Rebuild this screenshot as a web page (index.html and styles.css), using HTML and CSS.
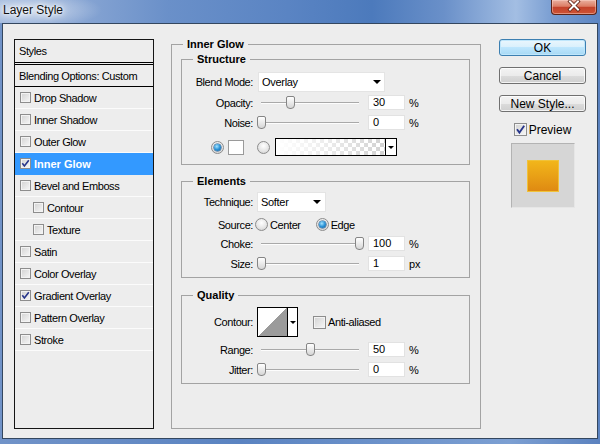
FILE: index.html
```html
<!DOCTYPE html>
<html>
<head>
<meta charset="utf-8">
<title>Layer Style</title>
<link rel="stylesheet" href="styles.css">
</head>
<body>
<div class="window">
  <div class="titlebar">
    <span class="title">Layer Style</span>
    <div class="close">
      <svg width="46" height="15" viewBox="0 0 46 15">
        <path d="M19 2.5 L27 10.5 M27 2.5 L19 10.5" stroke="#5a1e12" stroke-width="3.6" stroke-linecap="square" fill="none"/>
        <path d="M19 2.5 L27 10.5 M27 2.5 L19 10.5" stroke="#ffffff" stroke-width="2" stroke-linecap="square" fill="none"/>
      </svg>
    </div>
  </div>
  <div class="client">
    <div class="stylelist">
      <div class="row head">Styles</div>
      <div class="row blend">Blending Options: Custom</div>
      <div class="row item"><span class="cb"></span>Drop Shadow</div>
      <div class="row item"><span class="cb"></span>Inner Shadow</div>
      <div class="row item"><span class="cb"></span>Outer Glow</div>
      <div class="row item sel"><span class="cb"><svg width="9" height="9" viewBox="0 0 9 9"><path d="M1.3 4.2 L3.4 7 L7.8 1.2" stroke="#27358a" stroke-width="1.6" fill="none"/></svg></span>Inner Glow</div>
      <div class="row item"><span class="cb"></span>Bevel and Emboss</div>
      <div class="row item sub"><span class="cb"></span>Contour</div>
      <div class="row item sub"><span class="cb"></span>Texture</div>
      <div class="row item"><span class="cb"></span>Satin</div>
      <div class="row item"><span class="cb"></span>Color Overlay</div>
      <div class="row item"><span class="cb"><svg width="9" height="9" viewBox="0 0 9 9"><path d="M1.3 4.2 L3.4 7 L7.8 1.2" stroke="#27358a" stroke-width="1.6" fill="none"/></svg></span>Gradient Overlay</div>
      <div class="row item"><span class="cb"></span>Pattern Overlay</div>
      <div class="row item"><span class="cb"></span>Stroke</div>
    </div>

    <div class="middle">
      <fieldset class="grp outer">
        <legend>Inner Glow</legend>

        <fieldset class="grp inner structure">
          <legend>Structure</legend>
          <div class="frow r20">
            <span class="lbl">Blend Mode:</span>
            <div class="select blendsel"><span>Overlay</span><span class="arrow"></span></div>
          </div>
          <div class="frow mt3">
            <span class="lbl">Opacity:</span>
            <div class="slider"><span class="track"></span><span class="thumb" style="--v:0.3"></span></div>
            <span class="num">30</span><span class="unit">%</span>
          </div>
          <div class="frow mt5">
            <span class="lbl">Noise:</span>
            <div class="slider"><span class="track"></span><span class="thumb" style="--v:0"></span></div>
            <span class="num">0</span><span class="unit">%</span>
          </div>
          <div class="frow colors">
            <span class="radio on"></span>
            <span class="swatchsm"></span>
            <span class="radio r2"></span>
            <div class="gradbox"><span class="fill"></span><span class="drop"><span class="arrow sm"></span></span></div>
          </div>
        </fieldset>

        <fieldset class="grp inner elements">
          <legend>Elements</legend>
          <div class="frow r20">
            <span class="lbl">Technique:</span>
            <div class="select techsel"><span>Softer</span><span class="arrow"></span></div>
          </div>
          <div class="frow mt5">
            <span class="lbl tight">Source:</span>
            <span class="radio"></span><span class="rtext">Center</span>
            <span class="radio on edge"></span><span class="rtext">Edge</span>
          </div>
          <div class="frow mt4">
            <span class="lbl">Choke:</span>
            <div class="slider"><span class="track"></span><span class="thumb" style="--v:1"></span></div>
            <span class="num">100</span><span class="unit">%</span>
          </div>
          <div class="frow mt5">
            <span class="lbl">Size:</span>
            <div class="slider"><span class="track"></span><span class="thumb" style="--v:0"></span></div>
            <span class="num">1</span><span class="unit">px</span>
          </div>
        </fieldset>

        <fieldset class="grp inner quality">
          <legend>Quality</legend>
          <div class="frow r30">
            <span class="lbl">Contour:</span>
            <div class="contour"><span class="cpic"></span><span class="cdrop"><span class="arrow sm"></span></span></div>
            <span class="cb big aa"></span><span class="cbtext">Anti-aliased</span>
          </div>
          <div class="frow mt5">
            <span class="lbl">Range:</span>
            <div class="slider"><span class="track"></span><span class="thumb" style="--v:0.5"></span></div>
            <span class="num">50</span><span class="unit">%</span>
          </div>
          <div class="frow mt5">
            <span class="lbl">Jitter:</span>
            <div class="slider"><span class="track"></span><span class="thumb" style="--v:0"></span></div>
            <span class="num">0</span><span class="unit">%</span>
          </div>
        </fieldset>
      </fieldset>
    </div>

    <div class="side">
      <div class="btn def">OK</div>
      <div class="btn">Cancel</div>
      <div class="btn">New Style...</div>
      <div class="prev"><span class="cb big"><svg width="11" height="11" viewBox="0 0 11 11"><path d="M2 5.3 L4.4 8.6 L9.2 1.8" stroke="#27358a" stroke-width="1.8" fill="none"/></svg></span><span class="prevtext">Preview</span></div>
      <div class="swatch"><span class="square"></span></div>
    </div>
  </div>
</div>
</body>
</html>
```

FILE: styles.css
```css
* { box-sizing: border-box; }
html, body { margin: 0; padding: 0; }
body {
  width: 600px;
  height: 444px;
  overflow: hidden;
  font-family: "Liberation Sans", Arial, sans-serif;
  font-size: 11px;
  color: #000;
}

.window {
  width: 600px;
  height: 444px;
  display: flex;
  flex-direction: column;
  background: linear-gradient(90deg, #7193c8 0%, #5a83c1 40%, #7c9fd2 85%, #5b82bf 100%);
}

.titlebar {
  height: 23px;
  flex: none;
  display: flex;
  justify-content: space-between;
  align-items: flex-start;
  background:
    radial-gradient(ellipse 70px 18px at 32px 10px, rgba(255,255,255,0.55), rgba(255,255,255,0)),
    linear-gradient(90deg, #9db6dc 0%, #8aa7d4 12%, #6a90c9 28%, #5a84c3 48%, #4c7abc 62%, #6a90c9 74%, #a3bee3 86%, #7a9ed2 92%, #5c85c3 100%);
}

.title {
  padding-left: 3px;
  font-size: 12px;
  line-height: 20px;
  color: #111;
  text-shadow: 0 0 6px #fff, 0 0 10px #fff, 0 0 3px rgba(255,255,255,0.9);
}

.close {
  width: 46px;
  height: 15px;
  margin-right: 3px;
  border: 1px solid #5b2418;
  border-top: none;
  border-radius: 0 0 4px 4px;
  background: linear-gradient(#eab0a0 0%, #dc7d65 45%, #c4422b 52%, #cd5335 100%);
  box-shadow: inset 0 0 0 1px rgba(255,220,210,0.45);
}
.close svg { display: block; margin-top: -1px; margin-left: -1px; }

.client {
  margin-left: 2px;
  width: 596px;
  height: 416px;
  flex: none;
  border: 1px solid #34475f;
  background: #ededed;
  display: flex;
  align-items: flex-start;
  padding: 13px 0 0 11px;
}

/* ---------- left style list ---------- */
.stylelist {
  flex: none;
  margin-top: 2px;
  width: 140px;
  height: 390px;
  border: 1px solid #151515;
}
.row {
  height: 22px;
  display: flex;
  align-items: center;
  border-bottom: 1px solid #fbfbfb;
  padding-left: 5px;
  letter-spacing: -0.4px;
  white-space: nowrap;
}
.row.head {
  height: 23px;
  padding-left: 4px;
  border-bottom: 1px solid #000;
}
.row.blend {
  height: 23px;
  margin-top: 1px;
  padding-left: 4px;
  border-top: 1px solid #000;
  border-bottom: 1px solid #000;
}
.row.sub { padding-left: 18px; }
.row.sel {
  background: #3399ff;
  border-bottom-color: #3399ff;
  color: #fff;
  font-weight: bold;
  letter-spacing: 0;
}

.cb {
  flex: none;
  width: 11px;
  height: 11px;
  margin-right: 3px;
  border: 1px solid #8d8d8d;
  background: linear-gradient(135deg, #d2d2d2, #f7f7f7);
  box-shadow: inset 0 0 0 1px #f3f3f3;
  display: flex;
  align-items: center;
  justify-content: center;
}
.cb svg { display: block; }
.cb.big { width: 13px; height: 13px; margin-right: 2px; }

/* ---------- middle groups ---------- */
.middle {
  flex: none;
  width: 310px;
  margin-left: 17px;
}
.grp {
  margin: 0;
  padding: 0;
  min-width: 0;
  border: 1px solid #a3a3a3;
}
.grp > legend {
  margin-left: 11px;
  padding: 0 4px;
  height: 14px;
  line-height: 14px;
  font-weight: bold;
  font-size: 11px;
}
.grp.outer { height: 392px; }
.grp.structure { margin: 1px 10px 0 9px; padding: 6px 0 8px 0; }
.grp.elements { margin: 9px 10px 0 9px; padding: 4px 0 6px 0; }
.grp.quality { margin: 10px 10px 0 9px; padding: 5px 0 6px 0; }

.frow {
  display: flex;
  align-items: center;
  height: 15px;
  white-space: nowrap;
}
.frow.r20 { height: 20px; }
.frow.r30 { height: 30px; }
.mt3 { margin-top: 3px; }
.mt4 { margin-top: 4px; }
.mt5 { margin-top: 5px; }

.lbl {
  flex: none;
  width: 71px;
  margin-right: 4px;
  text-align: right;
  letter-spacing: -0.4px;
}
.lbl.tight { margin-right: 2px; }

.select {
  flex: none;
  height: 20px;
  background: #fff;
  border: 1px solid #e4e4e4;
  display: flex;
  align-items: center;
  justify-content: space-between;
  padding: 0 3px 0 3px;
  letter-spacing: -0.3px;
}
.blendsel { width: 127px; margin-left: 1px; }
.techsel { width: 69px; padding-right: 4px; }

.arrow {
  width: 0;
  height: 0;
  border-left: 4px solid transparent;
  border-right: 4px solid transparent;
  border-top: 4px solid #000;
}
.arrow.sm {
  border-left-width: 3px;
  border-right-width: 3px;
  border-top-width: 3px;
}

.slider {
  flex: none;
  position: relative;
  width: 106px;
  height: 15px;
}
.slider .track {
  position: absolute;
  left: 4px;
  right: 4px;
  top: 7px;
  height: 2px;
  border-top: 1px solid #a9a9a9;
  border-bottom: 1px solid #fdfdfd;
}
.slider .thumb {
  position: absolute;
  top: 1px;
  left: calc(var(--v) * 98px - 0.5px);
  width: 9px;
  height: 13px;
  border: 1px solid #858585;
  border-radius: 2px 2px 4px 4px;
  background: linear-gradient(#ffffff, #d6d6d6);
}

.num {
  flex: none;
  width: 37px;
  height: 15px;
  margin-left: 5px;
  padding-left: 4px;
  background: #fff;
  border: 1px solid #e2e2e2;
  line-height: 13px;
}
.unit { margin-left: 4px; }

.radio {
  flex: none;
  width: 13px;
  height: 13px;
  border-radius: 50%;
  border: 1px solid #8c8c8c;
  background: radial-gradient(circle at 50% 35%, #ffffff 0%, #e4e4e4 60%, #c9c9c9 100%);
  display: flex;
  align-items: center;
  justify-content: center;
}
.radio.on::after {
  content: "";
  width: 7px;
  height: 7px;
  border-radius: 50%;
  background: radial-gradient(circle at 40% 35%, #a6e4ff 0%, #2a92d6 50%, #145a96 100%);
  box-shadow: 0 0 0 0.5px #1d4f80;
}

.frow.colors { height: 18px; margin-top: 8px; padding-left: 29px; }
.swatchsm {
  flex: none;
  width: 16px;
  height: 15px;
  margin-left: 4px;
  background: #fff;
  border: 1px solid #9a9a9a;
}
.radio.r2 { margin-left: 13px; }
.gradbox {
  flex: none;
  display: flex;
  width: 122px;
  height: 18px;
  margin-left: 5px;
  border: 1px solid #000;
}
.gradbox .fill {
  flex: 1;
  background:
    linear-gradient(90deg, #ffffff 0%, rgba(255,255,255,0.6) 45%, rgba(255,255,255,0) 100%),
    repeating-conic-gradient(#d2d2d2 0% 25%, #ffffff 0% 50%) 0 0 / 8px 8px;
}
.gradbox .drop {
  flex: none;
  width: 11px;
  border-left: 1px solid #000;
  background: #fff;
  display: flex;
  align-items: center;
  justify-content: center;
}

.rtext { margin-left: 2px; letter-spacing: -0.4px; }
.radio.edge { margin-left: 15px; }

.contour {
  flex: none;
  display: flex;
  width: 41px;
  height: 30px;
  border: 1px solid #000;
}
.cpic {
  flex: none;
  width: 29px;
  background: linear-gradient(to bottom right, #ffffff 50%, #9b9b9b 50%);
}
.cdrop {
  flex: 1;
  border-left: 1px solid #000;
  background: #fff;
  display: flex;
  justify-content: center;
  align-items: center;
}
.cb.aa { margin-left: 15px; }
.cbtext { letter-spacing: -0.4px; }

/* ---------- right column ---------- */
.side {
  flex: none;
  width: 87px;
  margin-left: 18px;
  margin-top: 2px;
  display: flex;
  flex-direction: column;
  align-items: center;
}
.btn {
  width: 87px;
  height: 17px;
  margin-bottom: 11px;
  border: 1px solid #707070;
  border-radius: 3px;
  background: linear-gradient(#f3f3f3 0%, #ebebeb 50%, #dcdcdc 50%, #cfcfcf 100%);
  box-shadow: inset 0 0 0 1px rgba(255,255,255,0.75);
  display: flex;
  align-items: center;
  justify-content: center;
  font-size: 12px;
}
.btn.def {
  border-color: #3c7fb1;
  background: linear-gradient(#eaf6fd 0%, #d9f0fc 50%, #bee6fd 50%, #a7d9f5 100%);
  box-shadow: inset 0 0 0 1px #bfe6fb;
}
.prev {
  display: flex;
  align-items: center;
  height: 13px;
  font-size: 12px;
}
.swatch {
  margin-top: 7px;
  width: 64px;
  height: 65px;
  background: #d6d6d6;
  border: 1px solid;
  border-color: #b3b3b3 #e6e6e6 #e6e6e6 #b3b3b3;
  display: flex;
  align-items: center;
  justify-content: center;
  padding-top: 1px;
}
.square {
  width: 32px;
  height: 32px;
  border: 1px solid #f0c23a;
  background: linear-gradient(#f2b61a, #df8a12);
}
```
